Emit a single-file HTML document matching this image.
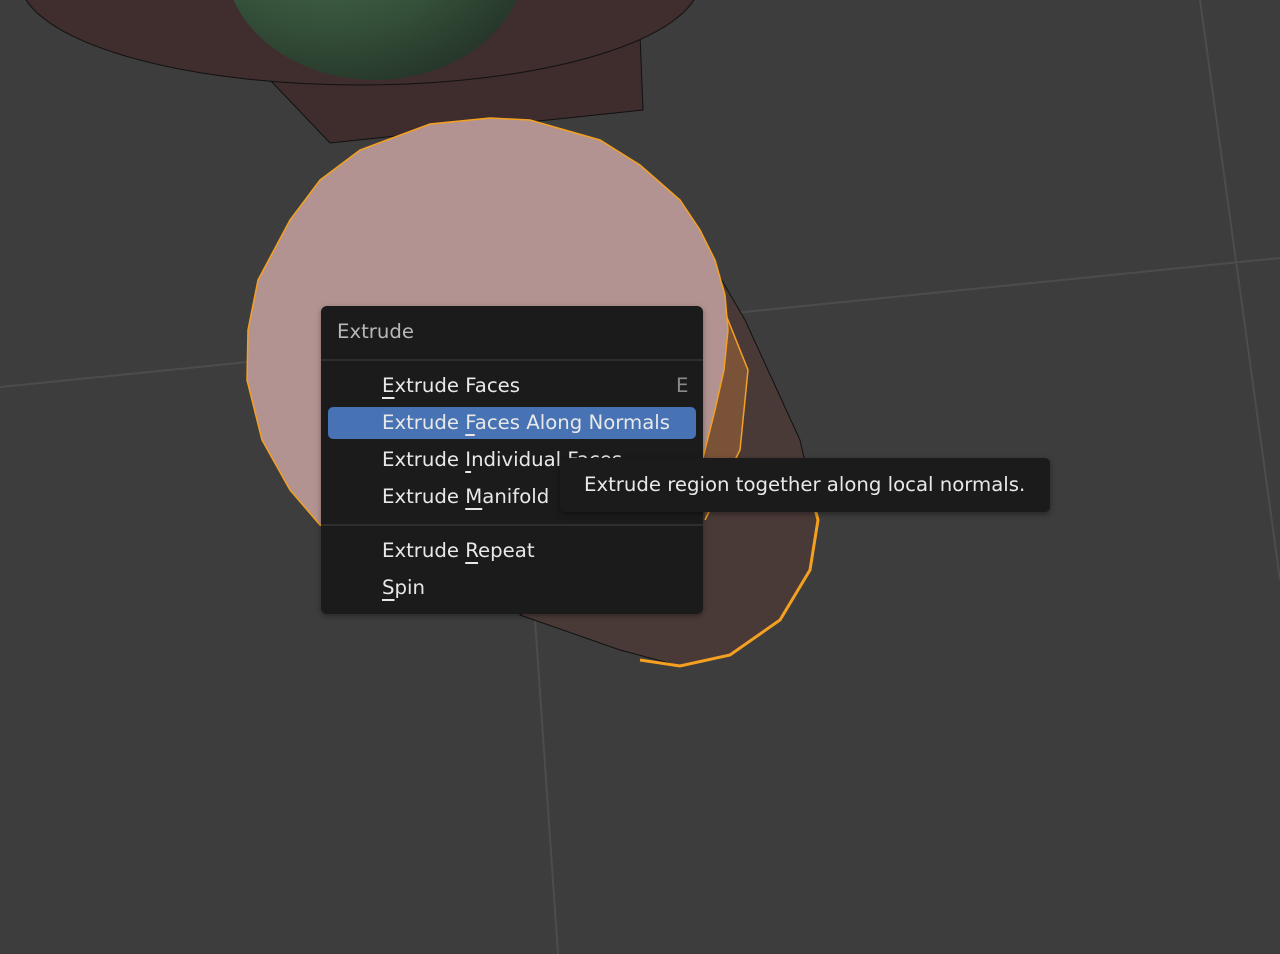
<!DOCTYPE html>
<html><head><meta charset="utf-8"><style>
html,body{margin:0;padding:0;width:1280px;height:954px;overflow:hidden;background:#3d3d3d;font-family:"DejaVu Sans","Liberation Sans",sans-serif;}
svg{position:absolute;left:0;top:0}
.menu{position:absolute;left:321px;top:306px;width:382px;height:308px;background:#1b1b1b;border-radius:6px;box-shadow:0 2px 6px rgba(0,0,0,.35)}
.hdr{position:absolute;left:16px;top:14px;font-size:19.7px;color:#b8b8b8}
.sep{position:absolute;left:0;width:382px;height:2px;background:#2e2e2e}
.it{position:absolute;left:61px;font-size:19.7px;color:#e8e8e8;white-space:nowrap;line-height:22px}
.u{text-decoration:underline;text-underline-offset:5px;text-decoration-thickness:1.5px}
.hl{position:absolute;left:7px;top:101px;width:368px;height:32px;background:#4772b3;border-radius:5px}
.tip{position:absolute;left:560px;top:458px;width:490px;height:54px;background:#1b1b1b;border-radius:5px;box-shadow:0 2px 6px rgba(0,0,0,.4)}
.tip span{position:absolute;left:24px;top:15px;font-size:19.7px;color:#e8e8e8;white-space:nowrap}
</style></head><body>
<svg width="1280" height="954">
<defs>
<radialGradient id="g" cx="0.35" cy="0.3" r="0.8"><stop offset="0" stop-color="#4c6e4c"/><stop offset="0.6" stop-color="#34503a"/><stop offset="1" stop-color="#243226"/></radialGradient>
</defs>
<line x1="0" y1="387" x2="1280" y2="258" stroke="#4c4c4c" stroke-width="2"/>
<line x1="1200" y1="0" x2="1280" y2="580" stroke="#4c4c4c" stroke-width="2"/>
<line x1="535" y1="620" x2="558" y2="954" stroke="#4c4c4c" stroke-width="2"/>
<polygon points="270,80 640,35 643,110 330,143" fill="#3e2d2c" stroke="#111" stroke-width="1"/>
<ellipse cx="360" cy="-20" rx="340" ry="105" fill="#3f2e2d" stroke="#111"/>
<ellipse cx="375" cy="-40" rx="150" ry="120" fill="url(#g)"/>
<polygon points="710,260 745,320 800,440 818,520 810,570 780,620 730,655 680,666 620,650 520,615 700,520" fill="#4a3a37" stroke="#111"/>
<path d="M700,250 L748,370 L740,450 L705,520" fill="#7a5238" stroke="#f5a020" stroke-width="1.5"/>
<path d="M805,470 L818,520 L810,570 L780,620 L730,655 L680,666 L640,660" fill="none" stroke="#f5a020" stroke-width="3"/>
<polygon points="490,118 530,120 600,140 640,165 680,200 700,230 715,260 725,295 728,330 724,370 715,410 700,470 660,520 600,560 500,565 400,560 320,525 290,490 262,440 247,380 248,330 258,280 290,220 320,180 360,150 430,124" fill="#b29391" stroke="#f5a020" stroke-width="1.5"/>
</svg>
<div class="menu">
<div class="hdr">Extrude</div>
<div class="sep" style="top:53px"></div>
<div class="hl"></div>
<div class="it" style="top:69px"><span class="u">E</span>xtrude Faces</div>
<div class="it" style="top:69px;left:355px;color:#8a8a8a">E</div>
<div class="it" style="top:106px">Extrude <span class="u">F</span>aces Along Normals</div>
<div class="it" style="top:143px">Extrude <span class="u">I</span>ndividual Faces</div>
<div class="it" style="top:180px">Extrude <span class="u">M</span>anifold</div>
<div class="sep" style="top:218px"></div>
<div class="it" style="top:234px">Extrude <span class="u">R</span>epeat</div>
<div class="it" style="top:271px"><span class="u">S</span>pin</div>
</div>
<div class="tip"><span>Extrude region together along local normals.</span></div>
</body></html>
